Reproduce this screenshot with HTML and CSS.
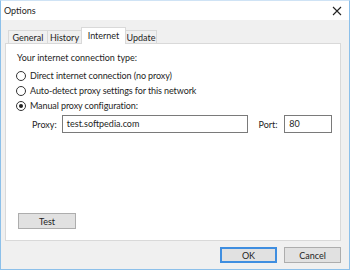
FILE: index.html
```html
<!DOCTYPE html>
<html lang="en">
  <head>
    <meta charset="utf-8" />
    <title>Options</title>
    <link rel="stylesheet" href="styles.css">
  </head>
  <body>
    <div class="window">
      <header class="titlebar">
        <span class="title">Options</span>
        <button class="close" title="Close">
          <svg width="10" height="10" viewBox="0 0 10 10"><path d="M1 1 L9 9 M9 1 L1 9" stroke="#222" stroke-width="1.1" fill="none"/></svg>
        </button>
      </header>

      <div class="client">
        <nav class="tabs">
          <span class="tab general">General</span>
          <span class="tab history">History</span>
          <span class="tab internet active">Internet</span>
          <span class="tab update">Update</span>
        </nav>

        <section class="panel">
          <p class="label">Your internet connection type:</p>
          <label class="radio"><span class="dot"></span>Direct internet connection (no proxy)</label>
          <label class="radio"><span class="dot"></span>Auto-detect proxy settings for this network</label>
          <label class="radio"><span class="dot checked"></span>Manual proxy configuration:</label>

          <div class="proxy">
            <span class="field-label">Proxy:</span>
            <span class="input host">test.softpedia.com</span>
            <span class="field-label port-label">Port:</span>
            <span class="input port">80</span>
          </div>

          <div class="spacer"></div>
          <button class="btn test">Test</button>
        </section>

        <footer class="actions">
          <button class="btn default">OK</button>
          <button class="btn">Cancel</button>
        </footer>
      </div>
    </div>
  </body>
</html>
```

FILE: styles.css
```css
body {
  margin: 0;
  font-family: 'Lato', 'Noto Sans', sans-serif;
  font-size: 9px;
  color: #1e1e1e;
}

.window {
  width: 350px;
  height: 270px;
  box-sizing: border-box;
  border: 1px solid #8cc0ea;
  border-top-color: #cfe3f5;
  display: flex;
  flex-direction: column;
  background: #f0f0f0;
}

.titlebar {
  height: 19px;
  background: #fff;
  display: flex;
  align-items: center;
  justify-content: space-between;
  padding: 0 7px 0 3px;
}
.titlebar .close {
  border: 0;
  background: none;
  padding: 0;
  display: flex;
}

.client {
  flex: 1;
  display: flex;
  flex-direction: column;
  padding: 7px 8px 6px 4px;
}

.tabs {
  display: flex;
  align-items: flex-end;
  padding-left: 3px;
  margin-bottom: -1px;
}
.tab {
  box-sizing: border-box;
  height: 14px;
  line-height: 13px;
  text-align: center;
  border: 1px solid #d9d9d9;
  border-bottom: 0;
  margin-right: -1px;
  background: #f0f0f0;
}
.tab.general { width: 40px; }
.tab.history { width: 35px; }
.tab.internet { width: 45px; }
.tab.update { width: 32px; }
.tab.active {
  position: relative;
  height: 17px;
  line-height: 15px;
  background: #fff;
  z-index: 1;
}

.panel {
  height: 198px;
  background: #fff;
  border: 1px solid #d9d9d9;
  padding: 8px 8px 11px 10px;
  box-sizing: border-box;
  display: flex;
  flex-direction: column;
}
.panel .label {
  margin: 0 0 4px 1px;
  line-height: 12px;
}

.radio {
  display: flex;
  align-items: center;
  height: 15px;
  letter-spacing: -0.1px;
}
.radio .dot {
  width: 8px;
  height: 8px;
  border: 1px solid #333;
  border-radius: 50%;
  margin-right: 4px;
  display: flex;
  align-items: center;
  justify-content: center;
}
.radio .dot.checked::after {
  content: '';
  width: 4px;
  height: 4px;
  border-radius: 50%;
  background: #222;
}

.proxy {
  display: flex;
  align-items: center;
  margin-top: 2px;
  padding-left: 16px;
}
.field-label {
  width: 30px;
}
.port-label {
  margin-left: 10px;
  width: 26px;
}
.input {
  height: 16px;
  line-height: 16px;
  border: 1px solid #7a7a7a;
  padding: 0 4px;
  box-sizing: content-box;
}
.input.host {
  width: 178px;
}
.input.port {
  width: 38px;
}

.spacer {
  flex: 1;
}

.btn {
  font: inherit;
  color: #1e1e1e;
  height: 16px;
  padding: 0;
  background: #e1e1e1;
  border: 1px solid #adadad;
}
.btn.test {
  width: 58px;
  margin-left: 2px;
}

.actions {
  display: flex;
  justify-content: flex-end;
  gap: 7px;
  margin-top: auto;
}
.actions .btn {
  width: 57px;
}
.actions .btn.default {
  border: 2px solid #3f8ee0;
}
```
